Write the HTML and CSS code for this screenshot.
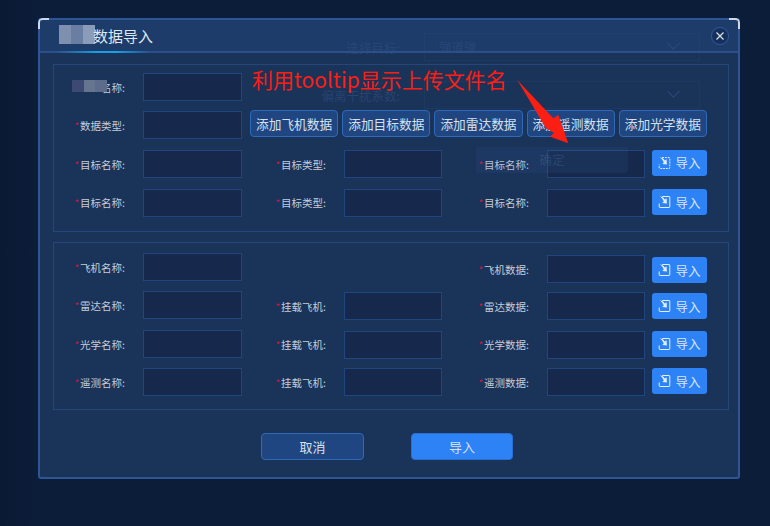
FILE: index.html
```html
<!DOCTYPE html>
<html lang="zh-CN">
<head>
    <meta charset="UTF-8">
    <meta name="viewport" content="width=device-width, initial-scale=1.0">
    <title>数据导入</title>
    <link rel="stylesheet" href="styles.css">
</head>
<body>
    <svg width="0" height="0" class="defs">
        <symbol id="icon-import" viewBox="0 0 14 15">
            <path d="M4.5 1.5H11.5a1.2 1.2 0 0 1 1.2 1.2V12.3a1.2 1.2 0 0 1-1.2 1.2H2.5a1.2 1.2 0 0 1-1.2-1.2V9" fill="none" stroke="currentColor" stroke-width="1.1"/>
            <path d="M1.6 1.4C4.5 1.8 6.2 3 7.2 4.8L9.2 3.4L9.6 9.2L4.6 8.6L6.2 7C5.4 4.8 3.8 2.8 1.6 1.4Z" fill="currentColor"/>
        </symbol>
    </svg>

    <div class="dialog">
        <span class="corner corner-left"></span>
        <span class="corner corner-right"></span>

        <!-- 后面一层弹窗透出来的内容 -->
        <div class="ghost ghost-row ghost-row-1"><span class="ghost-label">选择目标:</span><span class="ghost-value">弹道弹</span><span class="ghost-arrow"></span></div>
        <div class="ghost ghost-row ghost-row-2"><span class="ghost-label">偏离干扰系数:</span><span class="ghost-value"></span><span class="ghost-arrow"></span></div>

        <div class="dialog-header">
            <span class="dialog-title">数据导入</span>
            <button class="close-btn">
                <svg width="10" height="10" viewBox="0 0 10 10"><path d="M1.5 1.5L8.5 8.5M8.5 1.5L1.5 8.5" stroke="currentColor" stroke-width="1.1"/></svg>
            </button>
        </div>

        <div class="dialog-body">
            <div class="section section-top">
                <label class="label"><i class="plain">&nbsp;</i>名称:</label>
                <div class="input"></div>
                <div class="row-rest"></div>

                <label class="label"><i>*</i>数据类型:</label>
                <div class="input"></div>
                <div class="add-buttons">
                    <button class="add-btn">添加飞机数据</button>
                    <button class="add-btn">添加目标数据</button>
                    <button class="add-btn">添加雷达数据</button>
                    <button class="add-btn">添加遥测数据</button>
                    <button class="add-btn">添加光学数据</button>
                </div>

                <label class="label"><i>*</i>目标名称:</label>
                <div class="input"></div>
                <label class="label"><i>*</i>目标类型:</label>
                <div class="input"></div>
                <label class="label"><i>*</i>目标名称:</label>
                <div class="input"></div>
                <button class="import-btn"><svg class="icon dashed"><use href="#icon-import"/></svg>导入</button>

                <label class="label"><i>*</i>目标名称:</label>
                <div class="input down-1"></div>
                <label class="label"><i>*</i>目标类型:</label>
                <div class="input down-1"></div>
                <label class="label"><i>*</i>目标名称:</label>
                <div class="input down-1"></div>
                <button class="import-btn down-1"><svg class="icon"><use href="#icon-import"/></svg>导入</button>
            </div>

            <div class="section section-bottom">
                <label class="label"><i>*</i>飞机名称:</label>
                <div class="input"></div>
                <span class="empty"></span>
                <span class="empty"></span>
                <label class="label down-2"><i>*</i>飞机数据:</label>
                <div class="input down-2"></div>
                <button class="import-btn down-4"><svg class="icon"><use href="#icon-import"/></svg>导入</button>

                <label class="label"><i>*</i>雷达名称:</label>
                <div class="input"></div>
                <label class="label down-1"><i>*</i>挂载飞机:</label>
                <div class="input down-1"></div>
                <label class="label down-1"><i>*</i>雷达数据:</label>
                <div class="input down-1"></div>
                <button class="import-btn down-2"><svg class="icon"><use href="#icon-import"/></svg>导入</button>

                <label class="label"><i>*</i>光学名称:</label>
                <div class="input"></div>
                <label class="label"><i>*</i>挂载飞机:</label>
                <div class="input down-1"></div>
                <label class="label"><i>*</i>光学数据:</label>
                <div class="input down-1"></div>
                <button class="import-btn down-1"><svg class="icon"><use href="#icon-import"/></svg>导入</button>

                <label class="label"><i>*</i>遥测名称:</label>
                <div class="input"></div>
                <label class="label"><i>*</i>挂载飞机:</label>
                <div class="input"></div>
                <label class="label"><i>*</i>遥测数据:</label>
                <div class="input"></div>
                <button class="import-btn"><svg class="icon"><use href="#icon-import"/></svg>导入</button>
            </div>

            <div class="dialog-footer">
                <button class="footer-btn cancel">取消</button>
                <button class="footer-btn confirm">导入</button>
            </div>
        </div>

        <div class="ghost ghost-btn">确定</div>

        <!-- 打码 -->
        <div class="mosaic mosaic-title"><b></b><b></b><b></b></div>
        <div class="mosaic mosaic-name"><b></b><b></b><b></b></div>

        <!-- 截图上的标注 -->
        <div class="note">利用tooltip显示上传文件名</div>
        <svg class="note-arrow" width="56" height="66" viewBox="0 0 56 66">
            <path d="M1.3 0L37.3 38.3L42.3 35L52.3 63.3L34 56.7L38 53L30 48.3Z" fill="#fb1e12"/>
        </svg>
    </div>
</body>
</html>
```

FILE: styles.css
```css
* {
    box-sizing: border-box;
}
html, body {
    margin: 0;
    height: 100%;
}
body {
    padding: 18px 30px 0 38px;
    overflow: hidden;
    font-family: "Noto Sans CJK SC", "Liberation Sans", sans-serif;
    background: linear-gradient(90deg, #0a1a33 0, #0c1d3a 40px, #0c1d3a 100%);
}
button {
    font-family: inherit;
    padding: 0;
    cursor: pointer;
}
.defs {
    position: absolute;
}

/* 弹窗 */
.dialog {
    position: relative;
    width: 702px;
    height: 461px;
    border: 2px solid #2c5696;
    border-radius: 3px;
    background: #1a3359;
}
.corner {
    position: absolute;
    top: -2px;
    width: 11px;
    height: 11px;
    border-top: 2px solid #cfd8e6;
}
.corner-left {
    left: -2px;
    border-left: 2px solid #cfd8e6;
    border-top-left-radius: 5px;
}
.corner-right {
    right: -2px;
    border-right: 2px solid #cfd8e6;
    border-top-right-radius: 5px;
}
.dialog-header {
    display: flex;
    align-items: center;
    justify-content: space-between;
    height: 33px;
    padding: 0 9px 0 53px;
    border-bottom: 2px solid #2a4f8a;
    background: rgba(38, 74, 130, 0.4);
    position: relative;
}
.dialog-header::after {
    content: "";
    position: absolute;
    left: 15px;
    bottom: -2px;
    width: 95px;
    height: 2px;
    background: linear-gradient(90deg, #2a4f8a, #17a0e6 45%, #17a0e6 65%, #2a4f8a);
}
.dialog-title {
    font-size: 15px;
    color: #dfe7f3;
    position: relative;
    z-index: 1;
}
.close-btn {
    display: flex;
    align-items: center;
    justify-content: center;
    width: 18px;
    height: 18px;
    border: 1px solid #2f5a9e;
    border-radius: 50%;
    background: #16305c;
    color: #dfe7f3;
    position: relative;
    z-index: 1;
}
.dialog-body {
    padding: 11px 9px 0 13px;
}

/* 表单区 */
.section {
    display: grid;
    grid-template-columns: 89px 99px 102px 98px 105px 98px 62px;
    grid-auto-rows: 28px;
    row-gap: 10.4px;
    height: 168px;
    border: 1px solid #24467a;
    position: relative;
}
.section-top {
    padding-top: 8px;
}
.section-bottom {
    margin-top: 10px;
    padding-top: 10px;
}
.label {
    display: block;
    padding-right: 18px;
    font-size: 10.5px;
    line-height: 29px;
    color: #c5cdda;
    text-align: right;
}
.label i {
    margin-right: 1px;
    font-style: normal;
    font-size: 10px;
    color: #c8173c;
}
.label .plain {
    color: transparent;
}
.input {
    height: 28px;
    border: 1px solid #21457f;
    background: #16294d;
}
.row-rest {
    grid-column: 3 / -1;
}
.add-buttons {
    grid-column: 3 / -1;
    display: flex;
    gap: 4px;
    padding-left: 8px;
    margin-top: -1px;
}
.add-btn {
    width: 88.2px;
    height: 27px;
    border: 1px solid #2f69b8;
    border-radius: 4px;
    background: #1f4680;
    color: #d7e0ee;
    font-size: 12.7px;
    white-space: nowrap;
}
.import-btn {
    display: flex;
    align-items: center;
    justify-content: center;
    gap: 4px;
    width: 55px;
    height: 26px;
    margin-left: 7px;
    border: none;
    border-radius: 3px;
    background: #2d82f5;
    color: #d8e6fb;
    font-size: 12.5px;
}
.icon {
    width: 13px;
    height: 14px;
    color: #e3edfb;
}
.dashed {
    stroke-dasharray: 2 1;
}
.down-1 {
    margin-top: 1px;
}
.down-2 {
    margin-top: 2px;
}
.down-4 {
    margin-top: 4px;
}

/* 底部按钮 */
.dialog-footer {
    display: flex;
    gap: 47px;
    padding: 23px 0 0 208px;
}
.footer-btn {
    height: 27px;
    border-radius: 4px;
    color: #d7e0ee;
    font-size: 13px;
}
.cancel {
    width: 103px;
    border: 1px solid #2f69b8;
    background: #1f4680;
}
.confirm {
    width: 102px;
    border: 1px solid #2a6fd0;
    background: #2d82f5;
}

/* 后面透出来的弹窗 */
.ghost {
    position: absolute;
    color: #264470;
    font-size: 12.5px;
}
.ghost-row {
    display: flex;
    align-items: center;
    left: 270px;
    width: 390px;
    height: 28px;
}
.ghost-row-1 {
    top: 13px;
}
.ghost-row-2 {
    top: 61px;
}
.ghost-label {
    width: 90px;
    text-align: right;
}
.ghost-value {
    flex: 1;
    align-self: stretch;
    margin-left: 24px;
    padding: 3px 0 0 14px;
    border: 1px solid #1d3961;
}
.ghost-arrow {
    position: absolute;
    right: 22px;
    top: 6px;
    width: 9px;
    height: 9px;
    border-right: 1px solid #2c4c80;
    border-bottom: 1px solid #2c4c80;
    transform: rotate(45deg);
}
.ghost-btn {
    left: 436px;
    top: 127px;
    width: 152px;
    height: 26px;
    padding-top: 1px;
    line-height: 24px;
    text-align: center;
    border-radius: 3px;
    background: rgba(60, 110, 170, 0.12);
    color: rgba(70, 110, 160, 0.35);
}

/* 打码块 */
.mosaic {
    position: absolute;
    display: flex;
}
.mosaic b {
    display: block;
}
.mosaic-title {
    left: 19px;
    top: 5px;
    width: 41px;
    height: 19px;
    border-radius: 0 10px 10px 0;
    background: rgba(20, 62, 120, 0.6);
}
.mosaic-title b {
    width: 12px;
    height: 19px;
}
.mosaic-title b:nth-child(1) { background: #7f8fb0; }
.mosaic-title b:nth-child(2) { background: #6a7da3; }
.mosaic-title b:nth-child(3) { background: #8b9cba; }
.mosaic-name {
    left: 32px;
    top: 60px;
}
.mosaic-name b {
    width: 11.5px;
    height: 12px;
}
.mosaic-name b:nth-child(1) { background: #3c4a73; }
.mosaic-name b:nth-child(2) { background: #66758f; }
.mosaic-name b:nth-child(3) { background: #5d6c8b; }

/* 标注 */
.note {
    position: absolute;
    left: 212px;
    top: 44px;
    font-size: 21px;
    line-height: 30px;
    color: #fb1e12;
    white-space: nowrap;
}
.note-arrow {
    position: absolute;
    left: 476px;
    top: 60px;
}
```
